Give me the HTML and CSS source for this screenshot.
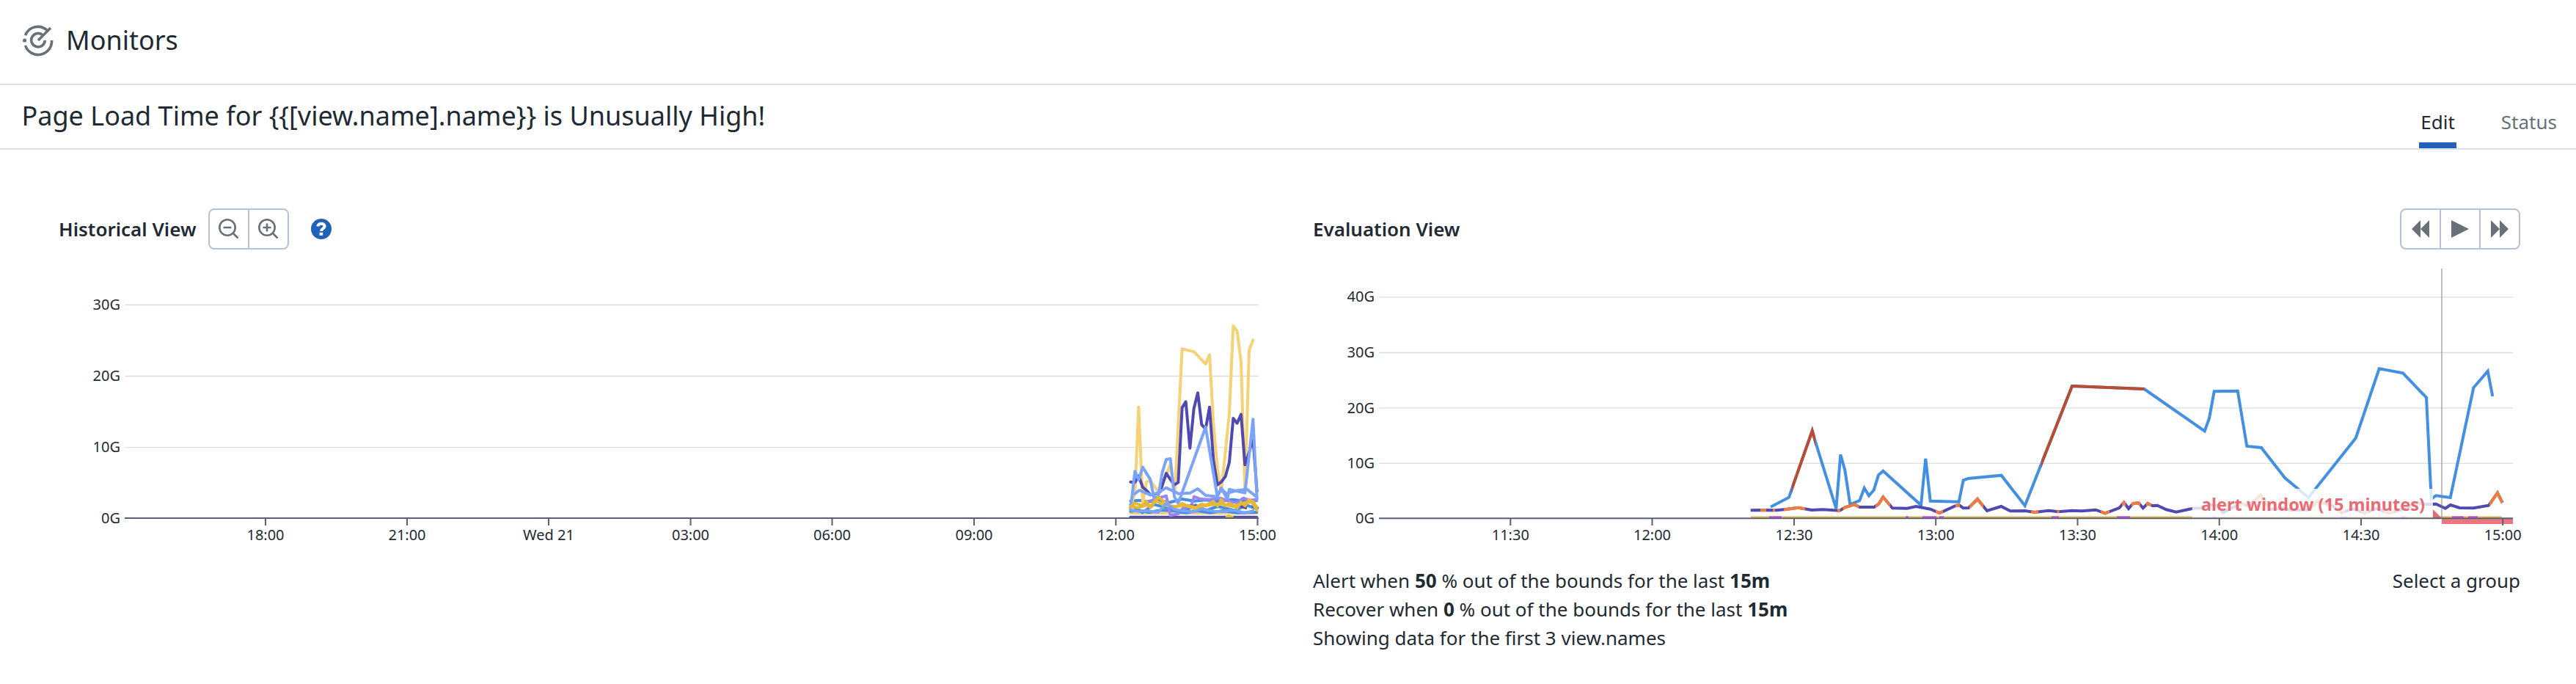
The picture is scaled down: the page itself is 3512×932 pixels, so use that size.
FILE: index.html
```html
<!DOCTYPE html>
<html lang="en">
<head>
<meta charset="utf-8">
<title>Monitors</title>
<link rel="stylesheet" href="styles.css">
</head>
<body>
<header class="topbar">
  <svg class="topbar-icon" viewBox="30 33 44 44">
    <path d="M34.5 48.2A18.5 18.5 0 0 1 64.5 41.5M34.5 62A18.5 18.5 0 0 0 70.5 55M58.5 48A9.3 9.3 0 1 0 61.3 55M52 55L69 38"/>
    <circle cx="33.6" cy="55" r="2.6"/>
  </svg>
  <span class="topbar-title">Monitors</span>
</header>
<div class="titlebar">
  <h1 class="monitor-name">Page Load Time for {{[view.name].name}} is Unusually High!</h1>
  <nav class="tabs">
    <a class="tab tab-active">Edit</a>
    <a class="tab">Status</a>
  </nav>
</div>
<main class="panels">
  <section class="panel">
    <div class="panel-head">
      <h2 class="panel-title">Historical View</h2>
      <div class="btn-group zoom-group">
        <button class="btn"><svg class="icon-line" viewBox="0 0 28 28"><circle cx="12" cy="12" r="10.7"/><path d="M19.5 19.5L26.5 26.5M6.5 12H17.5"/></svg></button>
        <button class="btn"><svg class="icon-line" viewBox="0 0 28 28"><circle cx="12" cy="12" r="10.7"/><path d="M19.5 19.5L26.5 26.5M6.5 12H17.5M12 6.5V17.5"/></svg></button>
      </div>
      <svg class="help" viewBox="0 0 28 28"><circle cx="14" cy="14" r="14"/><path d="M9.3 10.4C9.8 5.6 18.6 5.6 18.6 10.4C18.6 13.6 14 13.4 14 17"/><rect x="11.6" y="18.8" width="4.6" height="4"/></svg>
    </div>
    <svg class="chart chart-left" viewBox="80 360 1676 390">
      <g class="grid"><path d="M170 415.5H1716M170 512.5H1716M170 609.7H1716"/></g>
      <g class="ylabels"><text x="164" y="422">30G</text><text x="164" y="519">20G</text><text x="164" y="616">10G</text><text x="164" y="713">0G</text></g>
      <g class="series" transform="translate(1500 410) scale(.33333)">
        <path class="indigo" d="M124 884H640"/>
        <path class="sand" d="M124 867H640"/>
        <path class="azure" d="M124 818L160 815L195 822L235 812L280 825L335 810L385 818L430 814L490 820L540 812L590 818L640 816"/>
        <path class="azure" d="M124 860L160 856L200 865L250 855L300 858L350 866L400 858L450 866L500 858L560 866L640 864"/>
        <path class="azure" d="M124 832L172 866L220 832L290 850L335 865L390 835L430 858L480 840L550 856L600 835L640 850"/>
        <path class="violet" d="M180 823L215 815L240 806L270 797L287 877L320 870M335 850L373 836L384 800L410 810L450 812L490 806L530 820L560 825L585 806L610 815L640 812"/>
        <path class="indigo" d="M340 836L390 840M575 838L595 846M625 838L643 846"/>
        <path class="sand" d="M124 840L142 786L157 434L174 826L189 740L205 735L237 778L260 735L287 668L305 785L335 196L384 208L431 258L447 220L463 500L480 690L495 780L528 460L544 102L560 124L576 250L592 780L609 202L625 160"/>
        <path class="indigo" d="M124 740L142 742L157 715L174 762L189 774L205 793L225 790L245 780L270 705L287 730L303 752L319 742L335 436L350 412L367 602L383 440L399 376L415 506L431 524L447 434L463 650L479 752L495 740L512 718L528 660L544 480L560 500L576 464L592 670L609 620L625 560L641 780"/>
        <path class="sky" d="M124 850L142 697L157 732L174 680L205 730L220 808L237 800L254 700L270 648L287 645L303 800L319 828L431 516L479 800L495 765L520 810L528 770L560 778L592 785L625 484L641 810"/>
        <path class="sky" d="M142 788L160 774L205 793L237 784L270 764L320 788L367 785L399 768L431 795L479 800L495 768L515 787L560 775L600 770L641 802"/>
        <path class="gold" d="M124 845L142 826L174 838L189 820L205 845L238 802L270 828L303 848L335 828L383 850L415 830L431 835L463 820L480 838L495 812L512 838L528 826L560 846L576 824L592 838L609 812L625 830L641 856"/>
        <path class="gold" d="M124 840L157 845L189 835L205 840L225 815L260 835L303 840L350 836L399 845L447 834L495 830L544 840L592 825L625 820L641 845"/>
        <path class="sky" d="M124 855L157 860L189 858L237 864L270 828L303 852L335 858L383 862L415 850L463 860L512 862L528 855L560 858L592 868L625 858"/>
        <path class="gold" d="M518 882L528 880L540 884"/>
      </g>
      <path class="axis" d="M170 706H1716M362 707V716M555 707V716M748 707V716M941.5 707V716M1134.5 707V716M1328 707V716M1521.3 707V716M1714.5 707V716"/>
      <g class="xlabels"><text x="362" y="736">18:00</text><text x="555" y="736">21:00</text><text x="748" y="736">Wed 21</text><text x="941.5" y="736">03:00</text><text x="1134.5" y="736">06:00</text><text x="1328" y="736">09:00</text><text x="1521.3" y="736">12:00</text><text x="1714.5" y="736">15:00</text></g>
    </svg>
  </section>

  <section class="panel">
    <div class="panel-head">
      <h2 class="panel-title">Evaluation View</h2>
      <div class="btn-group play-group">
        <button class="btn"><svg class="icon-fill" viewBox="0 0 24 24"><path d="M12 0V24L0 12ZM24 0V24L12 12Z"/></svg></button>
        <button class="btn"><svg class="icon-fill" viewBox="0 0 24 24"><path d="M0 0L24 12L0 24Z"/></svg></button>
        <button class="btn"><svg class="icon-fill" viewBox="0 0 24 24"><path d="M0 0L12 12L0 24ZM12 0L24 12L12 24Z"/></svg></button>
      </div>
    </div>
    <svg class="chart chart-right" viewBox="1790 360 1646 390">
      <defs>
        <clipPath id="anomalyMain"><path d="M2442.7 400H2475V720H2442.7ZM2783 400H2923.5V720H2783Z"/></clipPath>
        <clipPath id="anomalyLow"><path d="M2400 660h8v50h-8zM2417 660h3v50h-3zM2432 660h29v50h-29zM2505 660h4v50h-4zM2512.500 660h22v50h-22zM2557 660h20v50h-20zM2639 660h10v50h-10zM2666 660h6v50h-6zM2685 660h19v50h-19zM2769 660h10v50h-10zM2804.500 660h3v50h-3zM2864 660h12v50h-12zM2893 660h5v50h-5zM2906 660h12v50h-12zM2926 660h7v50h-7zM3050 660h11v50h-11zM3070 660h23v50h-23zM3150 660h20v50h-20zM3187 660h10v50h-10zM3219 660h10v50h-10zM3250 660h14v50h-14zM3285 660h15v50h-15zM3394 660h20v50h-20z"/></clipPath>
      </defs>
      <g class="grid"><path d="M1880 404.800H3426M1880 480.500H3426M1880 555.800H3426M1880 631.400H3426"/></g>
      <g class="ylabels"><text x="1874" y="411">40G</text><text x="1874" y="487">30G</text><text x="1874" y="562.500">20G</text><text x="1874" y="638">10G</text><text x="1874" y="713">0G</text></g>
      <path class="base-line" d="M2387 704.500H3411"/>
      <path class="base-anomaly" d="M2412 704.500h17M2598 704.500h4M2621 704.500h19M2644 704.500h6M2797 704.500h10M2886 704.500h18M3016 704.500h6M3190 704.500h10M3273 704.500h8M3343 704.500h16M3365 704.500h13"/>
      <defs>
        <path id="main" d="M2414 690.700L2439 677.700L2442.700 666.700L2470.700 587L2475 601.700L2503.300 693L2509.300 619.300L2515.300 640.700L2522.300 687.300L2535.300 682L2541.700 665L2548 675.300L2554.700 667.700L2561 647.300L2567.300 641.700L2619 688.300L2625.300 625L2631.700 682.700L2670.700 683.700L2676.700 654.300L2683.300 652L2728.500 647.700L2760.700 689L2783 632.300L2825 526L2923.300 530L3005.700 587.300L3012 570L3018.700 533.300L3050.700 532.700L3063.300 608L3083 610L3115 651L3147.300 678L3211.700 597L3243.700 502.300L3276 508.300L3308 541.700L3314.700 680L3321 675.300L3340.700 678L3372.300 528.300L3391.700 505.700L3398.300 540"/>
        <path id="low" d="M2386.700 695.300L2403 695L2421.700 695.300L2435 694L2451.700 691.700L2470 695L2485 694.300L2508.300 695.700L2515.300 691.300L2528.300 687.300L2535 691L2555 691L2561 687L2567.300 677.300L2580 692.300L2600 692.700L2612.300 690L2631.700 693.700L2644.300 699L2665 689.700L2670.700 688L2676.700 692.300L2684 692L2696 680L2709 696L2728.300 690L2740.700 696.300L2760.700 696L2774 698L2792.700 695.700L2806 697.300L2825 695.700L2838.300 696.300L2857.300 694.700L2870 699.300L2889.300 692L2895.700 684.700L2902 693L2908.300 686L2915.700 685.300L2921.700 692.300L2928 686L2934.300 689L2941.300 688.700L2953.300 694.300L2966.700 697.700L2988.700 693L3000 692.300L3013 688L3023 689L3030.700 698.300L3055 686L3065 689L3082.300 674.700L3095 694.300L3113 692L3123 695L3147 694.700L3160 683L3180 689L3192.700 699L3207 693L3224 699L3240 693L3257 699L3280 693L3293 685L3308 687L3321 686.700L3334 692.700L3340.700 688L3353.300 692L3372.300 692.300L3393 688.700L3405 671.700L3411.700 685"/>
      </defs>
      <g class="lines">
        <use href="#main" class="main-line"/>
        <use href="#main" class="main-anomaly" clip-path="url(#anomalyMain)"/>
        <use href="#low" class="low-line"/>
        <use href="#low" class="low-anomaly" clip-path="url(#anomalyLow)"/>
      </g>
      <path class="alert-veil" d="M2988.700 666H3317V706H2988.700Z"/>
      <path class="alert-mark" d="M3317 694L3329 706H3317Z"/>
      <text class="alert-text" x="3153.500" y="695.500" textLength="305" lengthAdjust="spacingAndGlyphs">alert window (15 minutes)</text>
      <path class="alert-band" d="M3329 706H3426V714H3329Z"/>
      <path class="axis" d="M1880 706.200H3426M2059.300 707V716M2252.500 707V716M2446 707V716M2639.200 707V716M2832.500 707V716M3025.700 707V716M3219 707V716M3412.200 707V716"/>
      <path class="cursor-line" d="M3329 366V706"/>
      <g class="xlabels"><text x="2059.300" y="736">11:30</text><text x="2252.500" y="736">12:00</text><text x="2446" y="736">12:30</text><text x="2639.200" y="736">13:00</text><text x="2832.500" y="736">13:30</text><text x="3025.700" y="736">14:00</text><text x="3219" y="736">14:30</text><text x="3412.200" y="736">15:00</text></g>
    </svg>
    <div class="summary">
      <div class="conditions">
        <p class="condition">Alert when <b>50</b> % out of the bounds for the last <b>15m</b></p>
        <p class="condition">Recover when <b>0</b> % out of the bounds for the last <b>15m</b></p>
        <p class="condition">Showing data for the first 3 view.names</p>
      </div>
      <span class="group-select">Select a group</span>
    </div>
  </section>
</main>
</body>
</html>
```

FILE: styles.css
```css
* { box-sizing: border-box; }
body {
  margin: 0;
  background: #fff;
  color: #1f2a33;
  font-family: "Noto Sans", "Open Sans", sans-serif;
  font-size: 26px;
}
h1, h2, p { margin: 0; }

.topbar {
  display: flex;
  align-items: center;
  gap: 16px;
  height: 116px;
  padding: 0 30px 5px;
  border-bottom: 2px solid #dce0e9;
}
.topbar-icon {
  width: 44px;
  height: 44px;
  fill: none;
  stroke: #697077;
  stroke-width: 3.6;
}
.topbar-icon circle { fill: #697077; stroke: none; }
.topbar-title { font-size: 36px; line-height: 50px; }

.titlebar {
  display: flex;
  justify-content: space-between;
  height: 88px;
  padding: 0 24px 0 29.5px;
  border-bottom: 2px solid #dce0e9;
}
.monitor-name {
  font-size: 36px;
  font-weight: 400;
  line-height: 84px;
}
.tabs { display: flex; align-items: flex-end; gap: 59px; }
.tab {
  height: 55px;
  padding: 0 2px;
  line-height: 39px;
  color: #697077;
}
.tab-active { color: #1f2a33; border-bottom: 8px solid #2062b8; }

.panels {
  display: grid;
  grid-template-columns: 1676px 1646px;
  gap: 34px;
  padding: 80px 76px 0 80px;
}
.panel-head { display: flex; align-items: center; height: 56px; }
.panel-title { font-size: 26px; font-weight: 600; }
.btn-group {
  display: flex;
  height: 56px;
  border: 2px solid #b9c0d9;
  border-radius: 8px;
}
.zoom-group { width: 110px; margin-left: 16px; }
.play-group { width: 164px; margin-left: auto; }
.btn {
  box-sizing: content-box;
  flex: 1;
  display: flex;
  align-items: center;
  justify-content: center;
  padding: 0;
  border: 0;
  background: none;
}
.btn + .btn { border-left: 2px solid #b9c0d9; }
.icon-line { width: 28px; height: 28px; fill: none; stroke: #697077; stroke-width: 2.6; }
.icon-fill { width: 24px; height: 24px; fill: #697077; }
.help { width: 28px; height: 28px; margin-left: 30px; fill: #2062b8; }
.help path { fill: none; stroke: #fff; stroke-width: 4; }
.help rect { fill: #fff; }

.chart { display: block; height: 390px; margin-top: 20px; overflow: visible; }
.chart-left { width: 1676px; }
.chart-right { width: 1646px; }
.grid { fill: none; stroke: #dedede; stroke-width: 1.3; }
.axis { fill: none; stroke: #596078; stroke-width: 2; }
.ylabels, .xlabels { font-size: 20px; fill: #1f2a33; }
.ylabels { text-anchor: end; }
.xlabels { text-anchor: middle; }
.series { fill: none; stroke-width: 12; stroke-linecap: round; stroke-linejoin: round; }
.indigo { stroke: #5049b1; }
.sand { stroke: #f6d276; }
.azure { stroke: #438fe4; }
.violet { stroke: #9b84f5; }
.sky { stroke: #7ba4f8; }
.gold { stroke: #e5b835; }

.lines { fill: none; stroke-width: 4; }
.main-line { stroke: #438fe4; }
.main-anomaly { stroke: #b94c32; }
.low-line { stroke: #5049b1; }
.low-anomaly { stroke: #f07b3f; }
.base-line { stroke: #e5b835; stroke-width: 2; }
.base-anomaly { stroke: #c637ef; stroke-width: 2; }
.alert-veil { fill: #fff; fill-opacity: .8; }
.alert-mark { fill: #ea6a73; }
.alert-band { fill: #ec7680; }
.alert-text { font-size: 24px; font-weight: 700; fill: #ea6a73; text-anchor: middle; }
.cursor-line { stroke: #808080; stroke-opacity: .5; stroke-width: 2; }

.summary { display: flex; justify-content: space-between; margin-top: 22px; line-height: 39px; }
.summary b { font-weight: 700; }
```
